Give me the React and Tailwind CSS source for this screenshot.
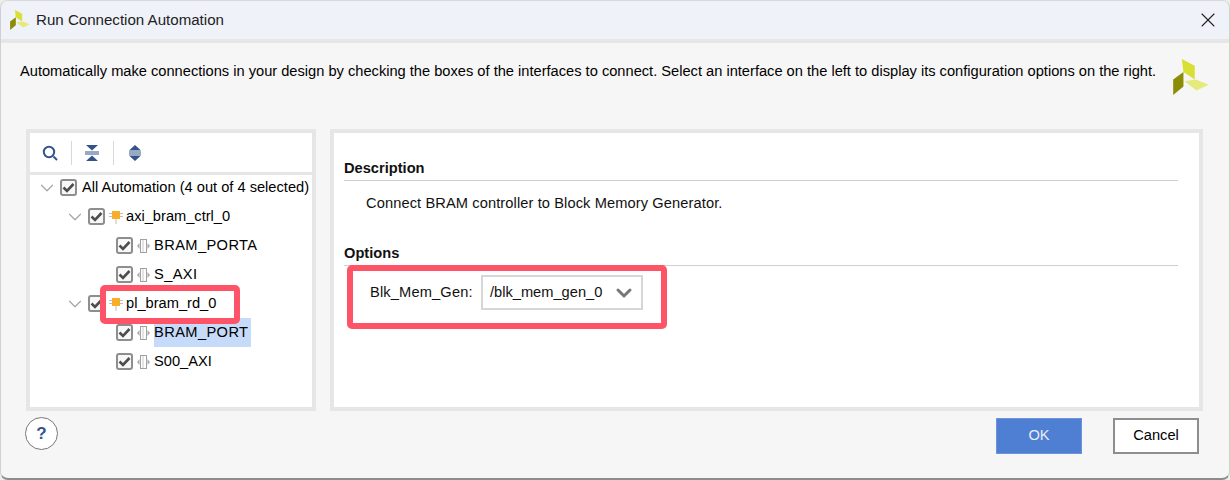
import { ChevronDown, X } from 'lucide-react';

const font = { fontFamily: '"Liberation Sans", Arial, sans-serif' };

function Logo({ size }) {
  return (
    <svg width={size} height={size} viewBox="0 0 104 105">
      <polygon points="25,0 63,20 63,60 30,38" fill="#d8df35" />
      <polygon points="33,65 66,60 104,75 68,92" fill="#e4ea7c" />
      <polygon points="0,60 30,38 30,80 0,105" fill="#8d8c05" />
    </svg>
  );
}

function Check() {
  return (
    <span className="flex h-[17px] w-[17px] shrink-0 items-center justify-center rounded-[3px] border-2 border-[#8e8e8e] bg-[#f8f8f8]">
      <svg width="13" height="13" viewBox="0 0 13 13">
        <path d="M1.5 6.5 L5 10 L11.5 3" fill="none" stroke="#4d4d4d" strokeWidth="2.6" />
      </svg>
    </span>
  );
}

function CellIcon() {
  return (
    <svg width="14" height="16" viewBox="0 0 14 16" className="block shrink-0">
      <path d="M0 4.5h14M0 7.5h14M7 10v5" stroke="#bdbdbd" strokeWidth="1" />
      <rect x="3" y="2" width="8" height="8" fill="#f9ae2b" />
    </svg>
  );
}

function PortIcon() {
  return (
    <svg width="14" height="14" viewBox="0 0 14 14" className="block shrink-0">
      <rect x="3.5" y="0.5" width="6" height="13" fill="#fff" stroke="#a0a0a0" />
      <path d="M6 1v12" stroke="#c8c8c8" />
      <path d="M2.5 4v6L0 7zM10.5 4v6L13 7z" fill="#a8a8a8" />
    </svg>
  );
}

function TreeRow({ indent, arrow, icon, label, selected, wide }) {
  return (
    <div className={`flex h-[29px] items-center ${indent}`}>
      {arrow && <ChevronDown size={22} strokeWidth={1.3} className="ml-[-3.5px] mr-[2.5px] shrink-0 text-[#a5a5a5]" />}
      <Check />
      {icon && <span className="ml-[4px] mr-[3px]">{icon}</span>}
      <span className={`flex h-[29px] items-center whitespace-nowrap pr-[3px] ${icon ? '' : 'ml-[5px]'} ${wide ? 'tracking-[0.4px]' : ''} ${selected ? 'bg-[#c6daf9]' : ''}`}>{label}</span>
    </div>
  );
}

export default function App() {
  return (
    <div style={font} className="relative h-[480px] w-[1230px] overflow-hidden bg-[#e9efe9] text-[14.65px] text-[#111]">
      <div className="flex h-full flex-col overflow-hidden rounded-lg border-b-2 border-l border-r border-t border-b-[#8c8c8c] border-l-[#d0d0d0] border-r-[#c4d8c4] border-t-[#d8d8d8] bg-[#f6f6f6]">
        {/* title bar */}
        <div className="flex h-[38px] shrink-0 items-center bg-[#eff2f9] pl-[9px] pr-[9px]">
          <Logo size={20} />
          <span className="ml-[6px] text-[15.1px] text-[#222]">Run Connection Automation</span>
          <X size={24} strokeWidth={1.1} className="ml-auto text-[#222]" />
        </div>
        <div className="h-[4px] shrink-0 bg-[#e6e6e6]" />

        <div className="flex shrink-0 items-start justify-between pl-[19px] pr-[20px] pt-[20px]">
          <span className="leading-[16px] text-black">
            Automatically make connections in your design by checking the boxes of the interfaces to connect. Select an interface on the left to display its configuration options on the right.
          </span>
          <span className="mt-[-4px]"><Logo size={36} /></span>
        </div>

        <div className="mt-[34px] flex h-[282px] shrink-0 gap-[14px] pl-[25px] pr-[26px]">
          {/* tree panel */}
          <div className="flex w-[290px] shrink-0 flex-col border-4 border-[#e6e6e6] bg-white">
            <div className="flex h-[42px] shrink-0 items-center border-b-[3px] border-[#e6e6e6] pl-[12px]">
              <svg width="16" height="16" viewBox="0 0 16 16">
                <circle cx="7" cy="7" r="5.2" fill="none" stroke="#33548b" strokeWidth="2" />
                <path d="M11.5 11.5 L15 15" stroke="#33548b" strokeWidth="2" />
              </svg>
              <div className="ml-[13px] h-[24px] w-px bg-[#d8d8d8]" />
              <svg width="14" height="16" viewBox="0 0 14 16" className="ml-[13px]">
                <path d="M1 0h12L7 5.5zM1 16h12L7 10.5z" fill="#33548b" />
                <path d="M0 7h14M0 9h14" stroke="#33548b" strokeWidth="1" />
              </svg>
              <div className="ml-[14px] h-[24px] w-px bg-[#d8d8d8]" />
              <svg width="14" height="16" viewBox="0 0 14 16" className="ml-[14px]">
                <path d="M7 0l6 5.5H1zM7 16l-6-5.5h12z" fill="#33548b" />
                <path d="M1 7h12M1 9h12" stroke="#33548b" strokeWidth="1" />
              </svg>
            </div>
            <div className="mt-[-2px] flex-1 text-black">
              <TreeRow indent="pl-[9px]" arrow label="All Automation (4 out of 4 selected)" />
              <TreeRow indent="pl-[37px]" arrow icon={<CellIcon />} label="axi_bram_ctrl_0" />
              <TreeRow indent="pl-[86px]" icon={<PortIcon />} label="BRAM_PORTA" wide />
              <TreeRow indent="pl-[86px]" icon={<PortIcon />} label="S_AXI" wide />
              <TreeRow indent="pl-[37px]" arrow icon={<CellIcon />} label="pl_bram_rd_0" />
              <TreeRow indent="pl-[86px]" icon={<PortIcon />} label="BRAM_PORT" selected wide />
              <TreeRow indent="pl-[86px]" icon={<PortIcon />} label="S00_AXI" />
            </div>
          </div>

          {/* options panel */}
          <div className="flex flex-1 flex-col border-4 border-[#e6e6e6] bg-white pl-[10px] pr-[21px] pt-[27px]">
            <div className="border-b border-[#cfcfcf] pb-[4px] font-bold leading-[16px]">Description</div>
            <div className="pl-[22px] pt-[14px] leading-[16px] tracking-[0.1px]">Connect BRAM controller to Block Memory Generator.</div>
            <div className="mt-[34px] border-b border-[#cfcfcf] pb-[4px] font-bold leading-[16px]">Options</div>
            <div className="flex items-center pl-[26px] pt-[9px]">
              <span className="w-[102px] whitespace-nowrap tracking-[0.15px]">Blk_Mem_Gen:</span>
              <div className="ml-[9px] flex h-[35px] w-[162px] items-center justify-between border-2 border-[#d6d6d6] pl-[7px] pr-[5px]">
                <span className="whitespace-nowrap">/blk_mem_gen_0</span>
                <ChevronDown size={24} strokeWidth={3} className="shrink-0 text-[#777]" />
              </div>
            </div>
          </div>
        </div>

        {/* footer */}
        <div className="flex flex-1 items-start justify-between pl-[24px] pr-[30px] pt-[6px]">
          <button className="flex h-[33px] w-[33px] items-center justify-center rounded-full border border-[#777] bg-white text-[17px] font-bold text-[#33548b]">?</button>
          <div className="mt-[1px] flex gap-[31px]">
            <button className="h-[36px] w-[86px] border border-[#6d93dd] bg-[#4f7fd3] text-[#e8edf8]">OK</button>
            <button className="h-[36px] w-[86px] border-2 border-[#8e8e8e] bg-white text-black">Cancel</button>
          </div>
        </div>
      </div>

      {/* red annotations drawn over the dialog */}
      <div className="absolute left-[100px] top-[285px] h-[39px] w-[140px] rounded-[5px] border-[6px] border-[#ff5367]" />
      <div className="absolute left-[347px] top-[265px] h-[64px] w-[320px] rounded-[5px] border-[6px] border-[#ff5367]" />
    </div>
  );
}
